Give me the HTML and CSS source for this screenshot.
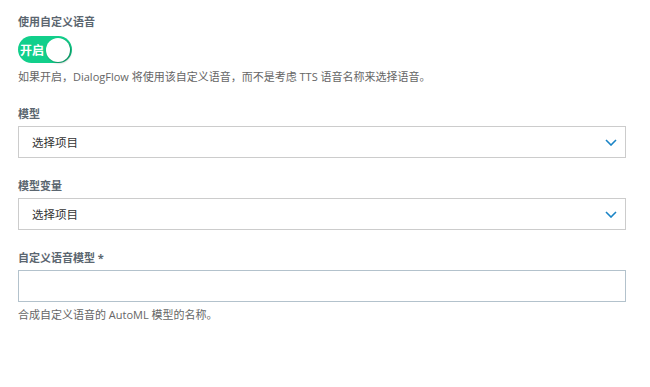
FILE: index.html
```html
<!DOCTYPE html>
<html lang="zh-CN">
  <head>
    <meta charset="UTF-8" />
    <title>自定义语音设置</title>
    <link rel="stylesheet" href="styles.css">
  </head>
  <body>
    <div class="settings">
      <div class="field">
        <label class="field-label">使用自定义语音</label>
        <div class="toggle on">
          <span class="toggle-text">开启</span>
          <span class="toggle-knob"></span>
        </div>
        <p class="hint hint-toggle">如果开启，DialogFlow 将使用该自定义语音，而不是考虑 TTS 语音名称来选择语音。</p>
      </div>

      <div class="field">
        <label class="field-label">模型</label>
        <div class="select">
          <span>选择项目</span>
          <svg class="chevron" width="12" height="7" viewBox="0 0 12 7">
            <path d="M1 1l5 5 5-5" fill="none" stroke="#1a84c6" stroke-width="1.6" />
          </svg>
        </div>
      </div>

      <div class="field">
        <label class="field-label">模型变量</label>
        <div class="select">
          <span>选择项目</span>
          <svg class="chevron" width="12" height="7" viewBox="0 0 12 7">
            <path d="M1 1l5 5 5-5" fill="none" stroke="#1a84c6" stroke-width="1.6" />
          </svg>
        </div>
      </div>

      <div class="field">
        <label class="field-label">自定义语音模型 *</label>
        <input type="text" class="text-input" />
        <p class="hint">合成自定义语音的 AutoML 模型的名称。</p>
      </div>
    </div>
  </body>
</html>
```

FILE: styles.css
```css
body {
  margin: 0;
  background-color: #fff;
  font-family: "Open Sans", "Noto Sans CJK SC", sans-serif;
}
.settings {
  width: 608px;
  padding: 15px 18px;
}
.field {
  margin-bottom: 21px;
}
.field:first-child {
  margin-bottom: 23px;
}
.field-label {
  display: block;
  font-size: 11px;
  line-height: 14px;
  font-weight: bold;
  color: #5b6670;
  margin-bottom: 5px;
}
.toggle {
  display: flex;
  align-items: center;
  justify-content: space-between;
  width: 54px;
  height: 27px;
  margin-top: 7px;
  padding: 0 2px 0 2px;
  box-sizing: border-box;
  border-radius: 14px;
  background-color: #12cf8b;
}
.toggle-text {
  font-size: 12px;
  font-weight: bold;
  color: #fff;
}
.toggle-knob {
  width: 24px;
  height: 24px;
  border-radius: 50%;
  background-color: #fff;
  box-shadow: 1px 1px 2px rgba(0, 0, 0, 0.35);
}
.hint {
  margin: 0;
  font-size: 11px;
  line-height: 14px;
  color: #666;
}
.hint-toggle {
  margin-top: 7px;
}
.select {
  display: flex;
  align-items: center;
  justify-content: space-between;
  height: 32px;
  box-sizing: border-box;
  padding: 0 8px 0 13px;
  border: 1px solid #ccc;
  font-size: 11.5px;
  color: #333;
}
.chevron {
  display: block;
}
.text-input {
  display: block;
  width: 100%;
  height: 32px;
  margin: 0;
  box-sizing: border-box;
  border: 1px solid #b3c2cc;
  border-radius: 0;
  outline: none;
}
.text-input + .hint {
  margin-top: 6px;
}
```
